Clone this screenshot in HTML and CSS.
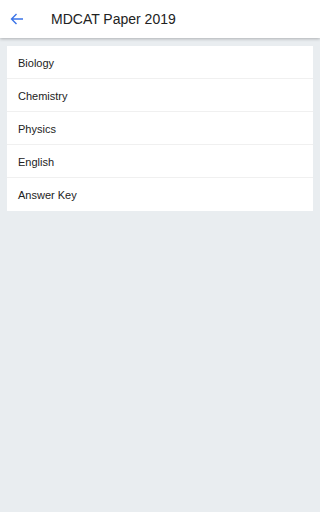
FILE: index.html
```html
<!DOCTYPE html>
<html>
<head>
<meta charset="utf-8">
<link rel="stylesheet" href="styles.css">
</head>
<body>
<header class="bar">
  <svg class="back" width="14" height="12" viewBox="0 0 14 12"><path d="M13 6H1.5M6.5 1L1.5 6l5 5" fill="none" stroke="#3b74e8" stroke-width="1.4"/></svg>
  <span class="title">MDCAT Paper 2019</span>
</header>
<main class="content">
  <ul class="list">
    <li class="item">Biology</li>
    <li class="item">Chemistry</li>
    <li class="item">Physics</li>
    <li class="item">English</li>
    <li class="item">Answer Key</li>
  </ul>
</main>
</body>
</html>
```
FILE: styles.css
```css
html, body { margin: 0; padding: 0; }
body {
  min-height: 512px; background: #e9edf0;
  font-family: "Liberation Sans", Arial, sans-serif;
  overflow: hidden;
}
.bar {
  height: 38px; background: #fff; display: flex; align-items: center;
  box-shadow: 0 1px 3px rgba(0,0,0,0.25);
  position: relative; z-index: 1;
}
.back { margin-left: 10px; }
.title { margin-left: 27px; font-size: 14px; color: #222; }
.content { padding: 8px 7px; }
.list { list-style: none; margin: 0; padding: 0; background: #fff; }
.item {
  height: 33px; box-sizing: border-box; padding-left: 11px; padding-top: 1px;
  display: flex; align-items: center; font-size: 11px; color: #222;
  border-bottom: 1px solid #f0f0f0;
}
.item:last-child { border-bottom: none; }
```
